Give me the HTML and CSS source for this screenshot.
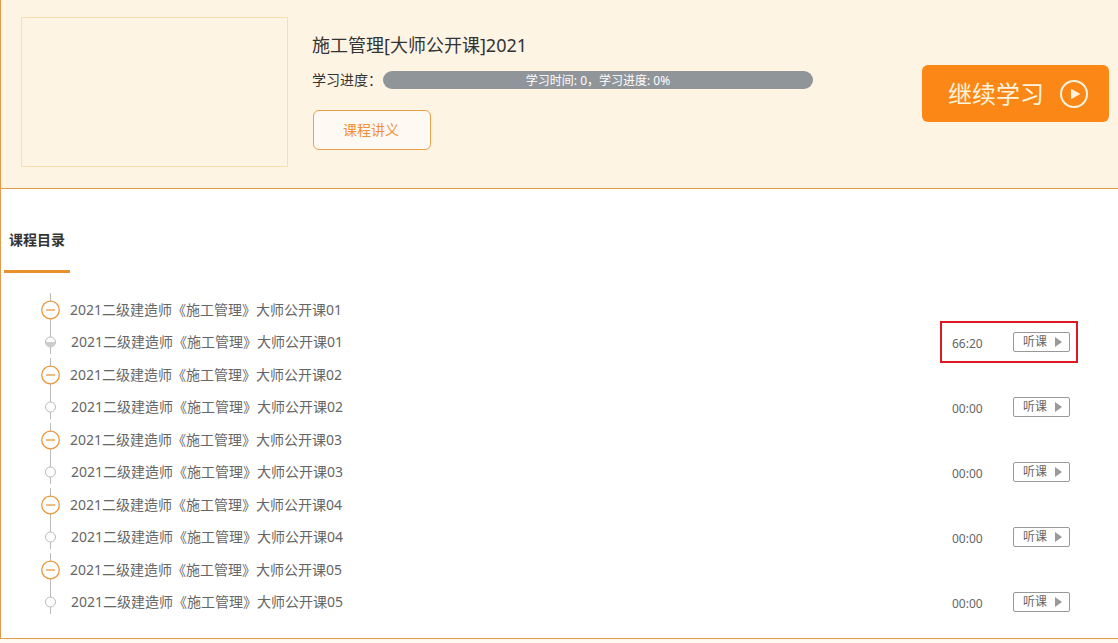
FILE: index.html
```
<!DOCTYPE html>
<html lang="zh-CN">
<head>
<meta charset="utf-8">
<meta name="viewport" content="width=device-width, initial-scale=1">
<title>施工管理[大师公开课]2021</title>
<link rel="stylesheet" href="styles.css">
</head>
<body>
<main class="course">
  <header class="hero">
    <div class="cover"></div>
    <div class="info">
      <h1 class="title">施工管理[大师公开课]2021</h1>
      <div class="progress">
        <span class="progress-label">学习进度：</span>
        <div class="progress-bar">学习时间: 0，学习进度: 0%</div>
      </div>
      <button class="handout" type="button">课程讲义</button>
    </div>
    <button class="resume" type="button">继续学习
      <svg class="resume-icon" viewBox="0 0 28 28" aria-hidden="true"><circle cx="14" cy="14" r="13" fill="none" stroke="currentColor" stroke-width="2"/><path d="M11.500 9.500L19.500 14L11.500 18.500Z" fill="currentColor" stroke="currentColor" stroke-linejoin="round"/></svg>
    </button>
  </header>
  <section class="catalog">
    <h2 class="tab">课程目录</h2>
    <ul class="chapters">
      <li class="chapter">
        <div class="row"><svg class="node" viewBox="0 0 20 20" aria-hidden="true"><circle class="fold" cx="9.500" cy="10" r="8.800"/><path class="fold" d="M5 10H14"/></svg><span class="name">2021二级建造师《施工管理》大师公开课01</span></div>
        <div class="row lesson"><svg class="node" viewBox="0 0 20 20" aria-hidden="true"><circle class="dot" cx="9.500" cy="10" r="5"/><path class="half" d="M4.500 10H14.500A5 5 0 0 1 4.500 10Z"/></svg><span class="name">2021二级建造师《施工管理》大师公开课01</span>
          <div class="actions marked"><span class="time">66:20</span><button class="listen" type="button">听课<svg class="play" viewBox="0 0 7 10" aria-hidden="true"><path d="M0 0L7 5L0 10Z"/></svg></button></div></div>
      </li>
      <li class="chapter">
        <div class="row"><svg class="node" viewBox="0 0 20 20" aria-hidden="true"><circle class="fold" cx="9.500" cy="10" r="8.800"/><path class="fold" d="M5 10H14"/></svg><span class="name">2021二级建造师《施工管理》大师公开课02</span></div>
        <div class="row lesson"><svg class="node" viewBox="0 0 20 20" aria-hidden="true"><circle class="dot" cx="9.500" cy="10" r="5"/></svg><span class="name">2021二级建造师《施工管理》大师公开课02</span>
          <div class="actions"><span class="time">00:00</span><button class="listen" type="button">听课<svg class="play" viewBox="0 0 7 10" aria-hidden="true"><path d="M0 0L7 5L0 10Z"/></svg></button></div></div>
      </li>
      <li class="chapter">
        <div class="row"><svg class="node" viewBox="0 0 20 20" aria-hidden="true"><circle class="fold" cx="9.500" cy="10" r="8.800"/><path class="fold" d="M5 10H14"/></svg><span class="name">2021二级建造师《施工管理》大师公开课03</span></div>
        <div class="row lesson"><svg class="node" viewBox="0 0 20 20" aria-hidden="true"><circle class="dot" cx="9.500" cy="10" r="5"/></svg><span class="name">2021二级建造师《施工管理》大师公开课03</span>
          <div class="actions"><span class="time">00:00</span><button class="listen" type="button">听课<svg class="play" viewBox="0 0 7 10" aria-hidden="true"><path d="M0 0L7 5L0 10Z"/></svg></button></div></div>
      </li>
      <li class="chapter">
        <div class="row"><svg class="node" viewBox="0 0 20 20" aria-hidden="true"><circle class="fold" cx="9.500" cy="10" r="8.800"/><path class="fold" d="M5 10H14"/></svg><span class="name">2021二级建造师《施工管理》大师公开课04</span></div>
        <div class="row lesson"><svg class="node" viewBox="0 0 20 20" aria-hidden="true"><circle class="dot" cx="9.500" cy="10" r="5"/></svg><span class="name">2021二级建造师《施工管理》大师公开课04</span>
          <div class="actions"><span class="time">00:00</span><button class="listen" type="button">听课<svg class="play" viewBox="0 0 7 10" aria-hidden="true"><path d="M0 0L7 5L0 10Z"/></svg></button></div></div>
      </li>
      <li class="chapter">
        <div class="row"><svg class="node" viewBox="0 0 20 20" aria-hidden="true"><circle class="fold" cx="9.500" cy="10" r="8.800"/><path class="fold" d="M5 10H14"/></svg><span class="name">2021二级建造师《施工管理》大师公开课05</span></div>
        <div class="row lesson"><svg class="node" viewBox="0 0 20 20" aria-hidden="true"><circle class="dot" cx="9.500" cy="10" r="5"/></svg><span class="name">2021二级建造师《施工管理》大师公开课05</span>
          <div class="actions"><span class="time">00:00</span><button class="listen" type="button">听课<svg class="play" viewBox="0 0 7 10" aria-hidden="true"><path d="M0 0L7 5L0 10Z"/></svg></button></div></div>
      </li>
    </ul>
  </section>
</main>
</body>
</html>
```
FILE: styles.css
```
* {
  box-sizing: border-box;
}

body {
  margin: 0;
  background: #fffaf2;
  color: #333;
  font-family: "Noto Sans", "Noto Sans CJK SC", sans-serif;
  font-size: 14px;
  line-height: 20px;
}

button {
  font-family: inherit;
  cursor: pointer;
}

h1,
h2,
ul {
  margin: 0;
  padding: 0;
}

.course {
  background: #fff;
  border-left: 1px solid #e39a4a;
  border-bottom: 1px solid #e39a4a;
}

.hero {
  display: flex;
  align-items: flex-start;
  padding: 17px 9px 21px 20px;
  background: #fef4e3;
  border-bottom: 1px solid #e39a4a;
}

.cover {
  flex: none;
  width: 267px;
  height: 150px;
  border: 1px solid #f8deb0;
}

.info {
  flex: 1;
  min-width: 0;
  padding: 14px 24px 0;
}

.title {
  font-size: 18px;
  font-weight: 400;
  line-height: 28px;
}

.progress {
  display: flex;
  align-items: center;
  margin-top: 11px;
}

.progress-label {
  flex: none;
  width: 71px;
}

.progress-bar {
  flex: 0 1 430px;
  height: 18px;
  border-radius: 9px;
  background: #90959a;
  color: #fff;
  font-size: 12px;
  line-height: 20px;
  text-align: center;
}

.handout {
  margin-top: 20px;
  margin-left: 1px;
  width: 118px;
  height: 40px;
  padding: 0 2px 2px 0;
  border: 1px solid #e8a04c;
  border-radius: 6px;
  background: #fef9f2;
  color: #f0913a;
  font-size: 14px;
}

.resume {
  flex: none;
  display: flex;
  align-items: center;
  gap: 16px;
  margin-top: 48px;
  height: 57px;
  padding: 0 21px 0 26px;
  border: 0;
  border-radius: 6px;
  background: #fb8717;
  color: #fff4df;
  font-size: 24px;
  line-height: 32px;
}

.resume-icon {
  width: 28px;
  height: 28px;
}

.catalog {
  padding: 41px 40px 20px 3px;
}

.tab {
  width: 66px;
  padding: 0 5px 20px;
  border-bottom: 3px solid #e8922e;
  font-size: 14px;
  line-height: 20px;
  white-space: nowrap;
}

.chapters {
  margin-top: 20px;
  padding-left: 37px;
  list-style: none;
}

.chapter {
  background: linear-gradient(#bbb, #bbb) 9px 0 / 1px 61px no-repeat;
}

.row {
  display: flex;
  align-items: center;
  height: 33px;
  color: #666;
}

.lesson {
  height: 32px;
}

.node {
  flex: none;
  width: 20px;
  height: 20px;
  margin-right: 9px;
}

.lesson .node {
  margin-right: 10px;
}

.fold {
  fill: #fff;
  stroke: #ec973f;
  stroke-width: 1.3;
}

.dot {
  fill: #fff;
  stroke: #bbb;
}

.half {
  fill: #ccc;
}

.name {
  flex: 1;
}

.actions {
  display: flex;
  align-items: center;
  justify-content: space-between;
  width: 138px;
  height: 42px;
  padding: 0 6px 0 10px;
  border: 2px solid transparent;
}

.marked {
  border-color: #dd1a1f;
}

.time {
  padding-top: 4px;
  font-size: 12px;
}

.listen {
  display: flex;
  align-items: center;
  justify-content: center;
  gap: 8px;
  width: 57px;
  height: 20px;
  padding: 0 0 0 2px;
  border: 1px solid #999;
  border-radius: 2px;
  background: #fff;
  color: #666;
  font-size: 12px;
  line-height: 18px;
}

.play {
  width: 7px;
  height: 10px;
  fill: #999;
}
```
